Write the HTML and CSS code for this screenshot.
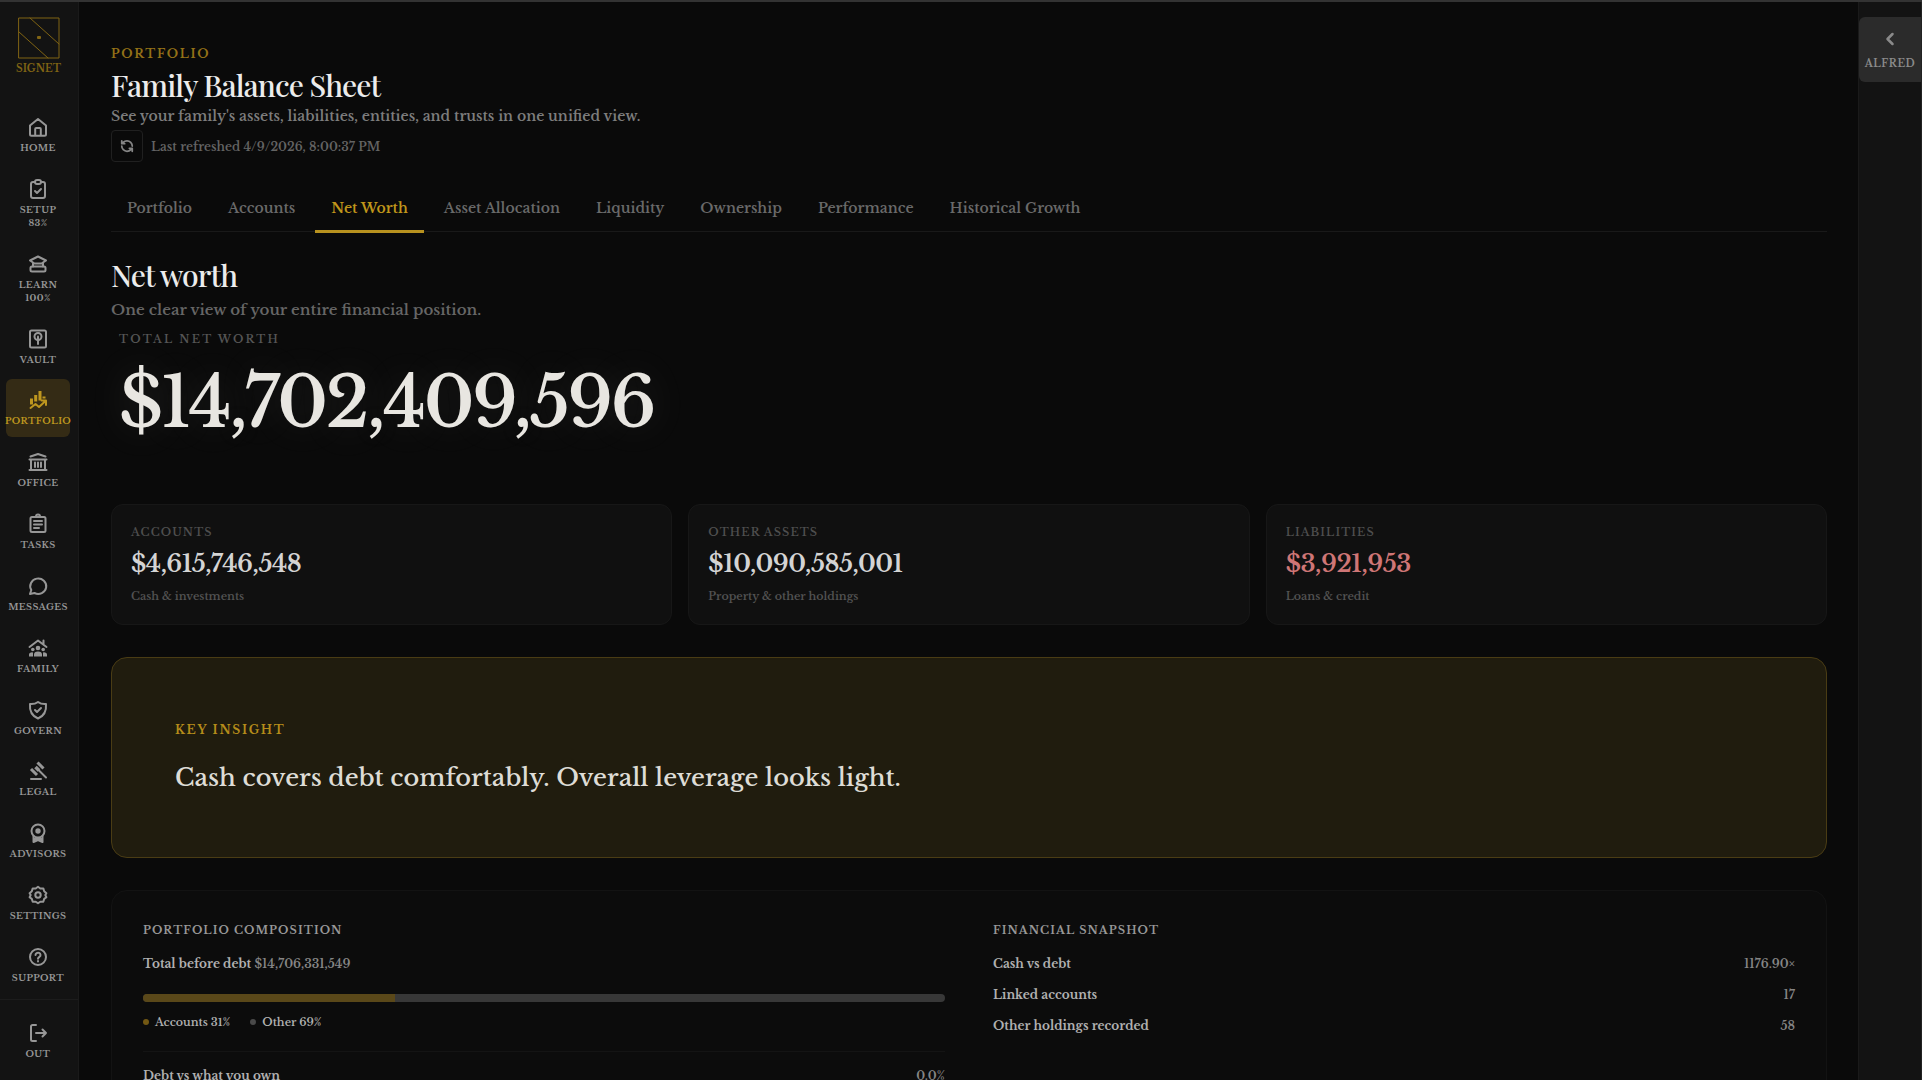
FILE: index.html
```html
<!DOCTYPE html>
<html lang="en">
<head>
<meta charset="utf-8">
<meta name="viewport" content="width=device-width, initial-scale=1">
<title>Signet – Family Balance Sheet</title>
<link rel="stylesheet" href="styles.css">
</head>
<body>
<div class="app">
  <aside class="sidebar">
    <a class="brand" href="#">
      <svg class="brand-mark" viewBox="0 0 42 42"><path d="M1 1h40v40H1zM12 1l29 26M1 15l29 26"/><rect class="brand-dot" x="19" y="19" width="4" height="3" rx="1"/></svg>
      <span>SIGNET</span>
    </a>
    <nav class="nav" aria-label="Main">
      <a class="nav-item" href="#"><svg class="icon" viewBox="0 0 24 24"><path d="M4 10.500v8.700a1.500 1.500 0 0 0 1.500 1.500h13a1.500 1.500 0 0 0 1.500-1.500v-8.700L12 4zM9.200 20.500v-6.500a1 1 0 0 1 1-1h3.600a1 1 0 0 1 1 1v6.500"/></svg><span>HOME</span></a>
      <a class="nav-item" href="#"><svg class="icon" viewBox="0 0 24 24"><path d="M9 5H7a2 2 0 0 0-2 2v12a2 2 0 0 0 2 2h10a2 2 0 0 0 2-2V7a2 2 0 0 0-2-2h-2M9 5a2 2 0 0 1 2-2h2a2 2 0 0 1 2 2a2 2 0 0 1-2 2h-2a2 2 0 0 1-2-2M9 14l2 2l4-4"/></svg><span>SETUP</span><span>83%</span></a>
      <a class="nav-item" href="#"><svg class="icon" viewBox="0 0 24 24"><path d="M12 4.500l8 4-4.500 3h-7L4 8.500z"/><rect x="4.500" y="14.500" width="15" height="5" rx="1.500"/><path d="M7 11.500v3M17 11.500v3"/></svg><span>LEARN</span><span>100%</span></a>
      <a class="nav-item" href="#"><svg class="icon" viewBox="0 0 24 24"><rect x="4" y="3.500" width="16" height="17" rx="1.500"/><circle cx="12" cy="9.500" r="3.500"/><path d="M12 9.500V17"/></svg><span>VAULT</span></a>
      <a class="nav-item active" href="#" aria-current="page"><svg class="icon" viewBox="0 0 24 24"><path class="thick" d="M5.500 10.500v6M9.700 7v6.500M14 3v9.500M18 8.500v2"/><path d="M4.500 20l5-4 3.500 3 6.500-6M15.500 12.500H20V17"/></svg><span>PORTFOLIO</span></a>
      <a class="nav-item" href="#"><svg class="icon" viewBox="0 0 24 24"><path d="M4.500 6.500L12 4l7.500 2.500M3.500 9.500h17M5 9.500v10M19 9.500v10M3.500 20h17M9 12.500V17M12 12.500V17M15 12.500V17"/></svg><span>OFFICE</span></a>
      <a class="nav-item" href="#"><svg class="icon" viewBox="0 0 24 24"><rect x="4.500" y="5" width="15" height="15" rx="1.500"/><path d="M10 4.500a2 2 0 0 1 4 0M8 9h8M8 12.500h8M8 16h5"/></svg><span>TASKS</span></a>
      <a class="nav-item" href="#"><svg class="icon" viewBox="0 0 24 24"><path d="M4 20l1.300-4a8 7.700 0 1 1 3.200 3z"/></svg><span>MESSAGES</span></a>
      <a class="nav-item" href="#"><svg class="icon" viewBox="0 0 24 24"><path d="M3.500 11L12 4.500l8.500 6.500M17.500 4.500v4"/><g class="solid"><circle cx="12" cy="12" r="2.300"/><circle cx="6.800" cy="13.500" r="1.800"/><circle cx="17.200" cy="13.500" r="1.800"/><path d="M8 20.500v-2a4 3 0 0 1 8 0v2zM3 20.500v-2a3 2 0 0 1 4-2v4zM21 20.500v-2a3 2 0 0 0-4-2v4z"/></g></svg><span>FAMILY</span></a>
      <a class="nav-item" href="#"><svg class="icon" viewBox="0 0 24 24"><path d="M12 4c2 1.500 5 2.200 8 2 .6 7-2 12-8 14.500C6 18 3.400 13 4 6c3 .2 6-.5 8-2zM9 12l2 2 4-4"/></svg><span>GOVERN</span></a>
      <a class="nav-item" href="#"><svg class="icon" viewBox="0 0 24 24"><path d="M5 20h10M13 11.500l7 7"/><path class="thick" d="M11.500 3.500l6 6M5 10l6 6"/><path class="handle" d="M12.500 8.500l-2.500 2.500"/></svg><span>LEGAL</span></a>
      <a class="nav-item" href="#"><svg class="icon" viewBox="0 0 24 24"><circle cx="12" cy="10" r="6.500"/><circle class="solid" cx="12" cy="10" r="2.700"/><path d="M7.500 15v6l4.500-2 4.500 2v-6"/><path d="M8 18h8"/></svg><span>ADVISORS</span></a>
      <a class="nav-item" href="#"><svg class="icon" viewBox="0 0 24 24"><path d="M12 3.800l2.300 1.700 3-.1.900 2.900 2.200 2-1.100 1.700 1.100 2.200-2.200 1.700-.9 2.900-3-.1L12 20.300l-2.300-1.600-3 .1-.9-2.900-2.200-1.700L4.700 12l-1.100-1.700 2.200-2 .9-2.900 3 .1z"/><circle cx="12" cy="12" r="2.700"/></svg><span>SETTINGS</span></a>
      <a class="nav-item" href="#"><svg class="icon" viewBox="0 0 24 24"><circle cx="12" cy="12" r="8"/><path d="M9.500 10a2.500 2.300 0 1 1 4 1.800c-1 .8-1.500 1-1.500 2M12 16v.5"/></svg><span>SUPPORT</span></a>
    </nav>
    <div class="sidebar-foot">
      <a class="nav-item" href="#"><svg class="icon" viewBox="0 0 24 24"><path d="M10 4H6.500A1.500 1.500 0 0 0 5 5.500v13A1.500 1.500 0 0 0 6.500 20H10M10 12h10M16.500 8.500L20 12l-3.500 3.500"/></svg><span>OUT</span></a>
    </div>
  </aside>

  <main class="main">
    <header class="page-head">
      <p class="eyebrow">PORTFOLIO</p>
      <h1 class="title">Family Balance Sheet</h1>
      <p class="lead">See your family's assets, liabilities, entities, and trusts in one unified view.</p>
      <div class="refresh">
        <button class="refresh-btn" type="button" aria-label="Refresh"><svg viewBox="0 0 24 24"><path d="M21 12a9 9 0 0 0-9-9 9.750 9.750 0 0 0-6.740 2.740L3 8M3 3v5h5M3 12a9 9 0 0 0 9 9 9.750 9.750 0 0 0 6.740-2.740L21 16M16 16h5v5"/></svg></button>
        <span>Last refreshed 4/9/2026, 8:00:37 PM</span>
      </div>
    </header>

    <div class="tabs" role="tablist">
      <button class="tab" role="tab" type="button">Portfolio</button>
      <button class="tab" role="tab" type="button">Accounts</button>
      <button class="tab selected" role="tab" type="button" aria-selected="true">Net Worth</button>
      <button class="tab" role="tab" type="button">Asset Allocation</button>
      <button class="tab" role="tab" type="button">Liquidity</button>
      <button class="tab" role="tab" type="button">Ownership</button>
      <button class="tab" role="tab" type="button">Performance</button>
      <button class="tab" role="tab" type="button">Historical Growth</button>
    </div>

    <section class="worth">
      <h2 class="title">Net worth</h2>
      <p class="worth-lead">One clear view of your entire financial position.</p>
      <div class="hero">
        <p class="hero-label">TOTAL NET WORTH</p>
        <p class="hero-value">$14,702,409,596</p>
      </div>
    </section>

    <section class="cards">
      <article class="card"><h3>ACCOUNTS</h3><p class="amount">$4,615,746,548</p><p class="note">Cash &amp; investments</p></article>
      <article class="card"><h3>OTHER ASSETS</h3><p class="amount">$10,090,585,001</p><p class="note">Property &amp; other holdings</p></article>
      <article class="card"><h3>LIABILITIES</h3><p class="amount debt">$3,921,953</p><p class="note">Loans &amp; credit</p></article>
    </section>

    <section class="insight">
      <h3 class="eyebrow">KEY INSIGHT</h3>
      <p>Cash covers debt comfortably. Overall leverage looks light.</p>
    </section>

    <section class="panel">
      <div class="column">
        <h3>PORTFOLIO COMPOSITION</h3>
        <p class="total"><b>Total before debt</b> <span class="figure">$14,706,331,549</span></p>
        <div class="bar"><div class="bar-fill" style="width:31.4%"></div></div>
        <ul class="legend">
          <li class="gold">Accounts 31%</li>
          <li>Other 69%</li>
        </ul>
        <dl class="rows divided">
          <div><dt>Debt vs what you own</dt><dd class="figure">0.0%</dd></div>
        </dl>
      </div>
      <div class="column">
        <h3>FINANCIAL SNAPSHOT</h3>
        <dl class="rows">
          <div><dt>Cash vs debt</dt><dd class="figure">1176.90×</dd></div>
          <div><dt>Linked accounts</dt><dd class="figure">17</dd></div>
          <div><dt>Other holdings recorded</dt><dd class="figure">58</dd></div>
        </dl>
      </div>
    </section>
  </main>

  <aside class="assistant">
    <button class="assistant-btn" type="button"><svg viewBox="0 0 24 24"><path d="M15 6l-6 6 6 6"/></svg><span>ALFRED</span></button>
  </aside>
</div>
</body>
</html>
```
FILE: styles.css
```css
* { box-sizing: border-box; }

body, h1, h2, h3, p, ul, dl, dd { margin: 0; padding: 0; }

body {
  background: #0a0a0a;
  color: #e0e0e0;
  font-family: "Libre Baskerville", "Liberation Serif", serif;
  font-weight: 600;
}

a { color: inherit; text-decoration: none; }

button {
  margin: 0;
  background: none;
  border: 0;
  color: inherit;
  font: inherit;
  cursor: pointer;
}

svg {
  display: block;
  fill: none;
  stroke: currentColor;
  stroke-width: 2;
  stroke-linecap: round;
  stroke-linejoin: round;
}

.app {
  display: flex;
  height: 100vh;
  border-top: 2px solid #333;
  overflow: hidden;
}

/* Sidebar */
.sidebar {
  display: flex;
  flex: none;
  flex-direction: column;
  width: 79px;
  padding-top: 15px;
  background: #131313;
  border-right: 1px solid #1a1a1a;
  color: #979797;
  font-size: 9px;
  font-weight: bold;
  letter-spacing: 0.04em;
  line-height: 13px;
}

.brand {
  display: flex;
  flex-direction: column;
  align-items: center;
  gap: 3px;
  margin: 0 1px 31px 0;
  color: #806414;
  font-size: 10px;
  letter-spacing: 0;
}

.brand-mark { width: 42px; height: 42px; stroke-width: 1; }
.brand-dot { fill: currentColor; stroke: none; }

.nav {
  display: flex;
  flex: 1;
  flex-direction: column;
  justify-content: space-between;
  padding-bottom: 5px;
}

.nav-item {
  display: flex;
  flex-direction: column;
  align-items: center;
  width: 64px;
  margin-left: 6px;
  padding: 9px 0 10px;
  border-radius: 6px;
  white-space: nowrap;
}

.nav-item.active { background: #342b15; color: #bd961f; }

.icon { width: 24px; height: 24px; margin-bottom: 2px; }
.icon .solid { fill: currentColor; stroke: none; }
.icon .thick { stroke-width: 3; stroke-linecap: butt; }
.icon .handle { stroke-width: 5; stroke-linecap: butt; }

.sidebar-foot { padding: 12px 0 10px; border-top: 1px solid #1c1c1c; }

/* Main column */
.main {
  flex: 1;
  min-width: 0;
  padding: 44px 31px 32px 32px;
  overflow-y: auto;
  scrollbar-width: none;
}

.eyebrow {
  color: #b58c1a;
  font-size: 12px;
  font-weight: bold;
  letter-spacing: 0.14em;
  line-height: 16px;
}

.page-head .eyebrow { margin-bottom: 3px; color: #937117; }

.title {
  color: #ececec;
  font-family: "Playfair Display", "Liberation Serif", serif;
  font-size: 30px;
  font-weight: 500;
  letter-spacing: -0.03em;
  line-height: 40px;
}

.lead { margin-top: 1px; color: #7d7d7d; font-size: 14px; line-height: 20px; }

.refresh {
  display: flex;
  align-items: center;
  gap: 8px;
  margin-top: 4px;
  color: #636363;
  font-size: 12px;
}

.refresh-btn {
  display: grid;
  place-items: center;
  width: 32px;
  height: 32px;
  padding: 0;
  border: 1px solid #202020;
  border-radius: 4px;
  color: #858585;
}

.refresh-btn svg { width: 14px; height: 14px; stroke-width: 3; }

.tabs {
  display: flex;
  gap: 4px;
  margin-top: 22px;
  border-bottom: 1px solid #191919;
}

.tab {
  margin-bottom: -2px;
  padding: 12px 16px 10px;
  border-bottom: 3px solid transparent;
  color: #696969;
  font-size: 14px;
  line-height: 24px;
  white-space: nowrap;
}

.tab.selected { border-color: #b8921f; color: #c0961a; }

.worth { padding-top: 23px; }
.worth-lead { margin-top: 3px; color: #666; font-size: 15px; line-height: 24px; }
.hero { padding: 7px 8px 0; }

.hero-label {
  color: #555;
  font-size: 11px;
  letter-spacing: 0.2em;
  line-height: 20px;
}

.hero-value {
  margin-top: 12px;
  color: #e8e6e1;
  font-size: 70px;
  font-weight: 500;
  letter-spacing: -0.04em;
  line-height: 84px;
  text-shadow: 0 0 40px rgba(232, 230, 225, 0.12);
}

/* Summary cards */
.cards {
  display: grid;
  grid-template-columns: repeat(3, 1fr);
  gap: 16px;
  margin-top: 59px;
}

.card {
  padding: 19px;
  background: #101010;
  border: 1px solid #171717;
  border-radius: 12px;
}

.card h3 {
  color: #4e4e4e;
  font-size: 11px;
  font-weight: 600;
  letter-spacing: 0.1em;
  line-height: 16px;
}

.amount {
  margin-top: 8px;
  color: #d4d4d4;
  font-size: 24px;
  letter-spacing: -0.02em;
  line-height: 32px;
}

.amount.debt { color: #cf7676; }
.note { margin-top: 7px; color: #525252; font-size: 11px; line-height: 18px; }

.insight {
  margin-top: 32px;
  padding: 64px 63px 57px;
  background: #201c0e;
  border: 1px solid #4a3c14;
  border-radius: 16px;
}

.insight p {
  margin-top: 18px;
  color: #dedcd6;
  font-size: 24px;
  font-weight: 500;
  line-height: 44px;
}

/* Composition and snapshot */
.panel {
  display: grid;
  grid-template-columns: repeat(2, 1fr);
  gap: 48px;
  margin-top: 32px;
  padding: 31px;
  background: #0c0c0c;
  border: 1px solid #131313;
  border-radius: 16px;
  color: #b0b0b0;
  font-size: 12px;
  line-height: 20px;
}

.column h3 {
  margin-bottom: 16px;
  color: #979797;
  font-size: 11px;
  letter-spacing: 0.1em;
  line-height: 16px;
}

.figure { color: #858585; }

.bar {
  height: 8px;
  margin-top: 20px;
  background: #383838;
  border-radius: 4px;
  overflow: hidden;
}

.bar-fill { height: 100%; background: #5a4819; }

.legend {
  display: flex;
  gap: 20px;
  margin-top: 12px;
  font-size: 11px;
  line-height: 16px;
  list-style: none;
}

.legend li { display: flex; align-items: center; gap: 6px; }

.legend li::before {
  width: 6px;
  height: 6px;
  background: #4a4a4a;
  border-radius: 50%;
  content: "";
}

.legend .gold::before { background: #735813; }

.rows { display: grid; gap: 11px; }
.rows div { display: flex; justify-content: space-between; }
.rows dt { font-weight: bold; }
.rows.divided { margin-top: 21px; padding-top: 14px; border-top: 1px solid #141414; }

/* Collapsed assistant rail */
.assistant {
  flex: none;
  width: 64px;
  padding-top: 15px;
  background: #131313;
  border-left: 1px solid #1a1a1a;
  border-right: 1px solid #222;
}

.assistant-btn {
  display: flex;
  flex-direction: column;
  align-items: center;
  gap: 8px;
  width: 100%;
  padding: 12px 0 11px;
  background: #2b2b2b;
  border-radius: 6px 0 0 6px;
  color: #8a8a8a;
  font-size: 10px;
  font-weight: bold;
  letter-spacing: 0.05em;
  line-height: 14px;
}

.assistant-btn svg { width: 20px; height: 20px; stroke-width: 3; }
```
